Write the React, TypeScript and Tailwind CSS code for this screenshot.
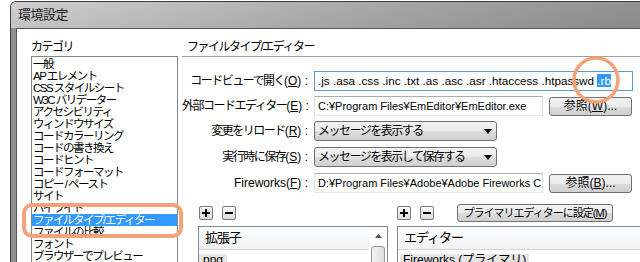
import type { ReactNode } from 'react'

const categories = [
  '一般',
  'AP エレメント',
  'CSS スタイルシート',
  'W3C バリデーター',
  'アクセシビリティ',
  'ウィンドウサイズ',
  'コードカラーリング',
  'コードの書き換え',
  'コードヒント',
  'コードフォーマット',
  'コピー / ペースト',
  'サイト',
  'ハイライト',
  'ファイルタイプ/エディター',
  'ファイルの比較',
  'フォント',
  'ブラウザーでプレビュー',
]

const selectedCategory = 'ファイルタイプ/エディター'

function Label({ text, keyChar, latin }: { text: string; keyChar: string; latin?: boolean }) {
  return (
    <div className="w-[126px] shrink-0 whitespace-nowrap text-right leading-[20px]">
      <span className={latin ? '' : 'tracking-[-1.5px]'}>{text}</span>(<span className="underline">{keyChar}</span>) :
    </div>
  )
}

function Button({ children, className }: { children: ReactNode; className?: string }) {
  return (
    <div
      className={`flex items-center justify-center whitespace-nowrap rounded-[3px] border border-[#707070] bg-[linear-gradient(#f3f3f3,#ebebeb_50%,#dddddd_50%,#cfcfcf)] leading-none ${className ?? ''}`}
    >
      {children}
    </div>
  )
}

function Select({ value }: { value: string }) {
  return (
    <div className="flex h-[20px] w-[183px] items-center justify-between rounded-[3px] border border-[#707070] bg-[linear-gradient(#f3f3f3,#ebebeb_50%,#dddddd_50%,#cfcfcf)] pl-[3px] pr-[4px]">
      <span className="whitespace-nowrap tracking-[-1.5px]">{value}</span>
      <svg width="8" height="5" viewBox="0 0 8 5">
        <path d="M0 0h8L4 5z" fill="#000" />
      </svg>
    </div>
  )
}

function Input({ children, width, focused }: { children: ReactNode; width: string; focused?: boolean }) {
  return (
    <div
      className={`flex h-[20px] items-center overflow-hidden whitespace-nowrap border bg-white pl-[3px] ${width} ${
        focused ? 'border-[#5c9ad6]' : 'border-[#abadb3] border-b-[#e3e9ef] border-l-[#dbdfe6] border-r-[#dbdfe6]'
      }`}
    >
      {children}
    </div>
  )
}

function MiniButton({ kind }: { kind: 'plus' | 'minus' }) {
  return (
    <div className="flex h-[14px] w-[14px] items-center justify-center rounded-[2px] border border-[#7a7a7a] bg-[linear-gradient(#fafafa,#dcdcdc)]">
      <svg width="8" height="8" viewBox="0 0 8 8">
        <path d="M0 4h8" stroke="#000" strokeWidth="2" />
        {kind === 'plus' && <path d="M4 0v8" stroke="#000" strokeWidth="2" />}
      </svg>
    </div>
  )
}

function ListHeader({ children }: { children: ReactNode }) {
  return (
    <div className="h-[23px] border-b border-[#d5d5d5] bg-[linear-gradient(#ffffff,#f1f2f4)] pl-[6px] text-[13px] leading-[22px] tracking-[-1px]">
      {children}
    </div>
  )
}

export default function App() {
  return (
    <div className="relative h-[262px] w-[640px] overflow-hidden bg-white text-[12px] text-black font-['Liberation_Sans','Noto_Sans_CJK_JP',sans-serif]">
      <div className="ml-[10px] mt-[1px] flex h-[261px] flex-col overflow-hidden rounded-tl-[6px] border-l border-t border-[#3c3c3c] bg-[linear-gradient(90deg,#8f8f8f,#b3b3b3_50%,#9a9a9a)]">
        <div className="flex h-[26px] shrink-0 items-center bg-[linear-gradient(165deg,#cfcfcf_0%,#b4b4b4_35%,#a2a2a2_60%,#8a8a8a_100%)] pl-[7px] text-[13px] text-[#1c1c1c]">
          <span className="tracking-[-0.5px]">環境設定</span>
        </div>
        <div className="flex min-h-0 flex-1 pl-[5px]">
          <div className="flex min-h-0 flex-1 border-l border-t border-[#555] bg-white">
            {/* category list */}
            <div className="flex w-[161px] shrink-0 flex-col pl-[14px] pt-[9px]">
              <div className="h-[18px] leading-[18px] tracking-[-1.5px]">カテゴリ</div>
              <div className="flex-1 border border-[#828790] pt-[1px]">
                {categories.map((c) => (
                  <div
                    key={c}
                    className={`h-[12px] whitespace-nowrap pl-[1px] text-[11.5px] leading-[12px] tracking-[-1.5px] ${
                      c === selectedCategory ? 'bg-[#3399ff] text-white' : ''
                    }`}
                  >
                    {c}
                  </div>
                ))}
              </div>
            </div>

            {/* settings panel */}
            <div className="ml-[4px] flex min-w-0 flex-1 flex-col pt-[9px]">
              <div className="h-[20px] border-b border-[#a0a0a0] pl-[5px] leading-[18px] tracking-[-1.5px]">
                ファイルタイプ/エディター
              </div>

              <div className="mt-[14px] flex h-[20px] items-center gap-[6px]">
                <Label text="コードビューで開く" keyChar="O" />
                <Input width="w-[319px]" focused>
                  <span className="text-[11.7px]">
                    .js .asa .css .inc .txt .as .asc .asr .htaccess .htpasswd{' '}
                    <span className="bg-[#3399ff] text-white">.rb</span>
                  </span>
                </Input>
              </div>

              <div className="mt-[5px] flex h-[20px] items-center gap-[6px]">
                <Label text="外部コードエディター" keyChar="E" />
                <Input width="w-[229px]">
                  <span className="text-[11px]">C:¥Program Files¥EmEditor¥EmEditor.exe</span>
                </Input>
                <Button className="h-[19px] w-[83px]">
                  参照(<span className="underline">W</span>)...
                </Button>
              </div>

              <div className="mt-[5px] flex h-[20px] items-center gap-[6px]">
                <Label text="変更をリロード" keyChar="R" />
                <Select value="メッセージを表示する" />
              </div>

              <div className="mt-[6px] flex h-[20px] items-center gap-[6px]">
                <Label text="実行時に保存" keyChar="S" />
                <Select value="メッセージを表示して保存する" />
              </div>

              <div className="mt-[6px] flex h-[20px] items-center gap-[6px]">
                <Label text="Fireworks" keyChar="F" latin />
                <Input width="w-[229px]">
                  <span className="text-[11px]">D:¥Program Files¥Adobe¥Adobe Fireworks C</span>
                </Input>
                <Button className="h-[19px] w-[83px]">
                  参照(<span className="underline">B</span>)...
                </Button>
              </div>

              <div className="mt-[11px] flex gap-[9px] pl-[16px]">
                <div className="flex w-[190px] shrink-0 flex-col">
                  <div className="flex h-[18px] items-center gap-[9px] pl-[1px]">
                    <MiniButton kind="plus" />
                    <MiniButton kind="minus" />
                  </div>
                  <div className="mt-[4px] flex h-[40px] border border-[#828790]">
                    <div className="flex-1">
                      <ListHeader>拡張子</ListHeader>
                      <div className="pt-[1px]">
                        <span className="inline-block bg-[#e6e6e6] px-[4px] leading-[13px]">png</span>
                      </div>
                    </div>
                    <div className="flex w-[18px] flex-col items-center">
                      <div className="flex h-[19px] items-center justify-center">
                        <svg width="7" height="4" viewBox="0 0 7 4">
                          <path d="M3.5 0L7 4H0z" fill="#555" />
                        </svg>
                      </div>
                      <div className="mt-[1px] h-[20px] w-[14px] rounded-t-[3px] border border-[#979797] bg-[linear-gradient(90deg,#f2f2f2,#dedede)]" />
                    </div>
                  </div>
                </div>

                <div className="flex w-[260px] shrink-0 flex-col">
                  <div className="flex h-[18px] items-center">
                    <MiniButton kind="plus" />
                    <div className="ml-[9px]">
                      <MiniButton kind="minus" />
                    </div>
                    <Button className="ml-[23px] h-[18px] w-[156px] text-[11px] tracking-[-1px]">
                      プライマリエディターに設定(<span className="underline">M</span>)
                    </Button>
                  </div>
                  <div className="mt-[4px] h-[40px] border border-[#828790]">
                    <ListHeader>エディター</ListHeader>
                    <div className="pl-[2px] pt-[1px]">
                      <span className="inline-block bg-[#e6e6e6] px-[3px] leading-[13px]">Fireworks (プライマリ)</span>
                    </div>
                  </div>
                </div>
              </div>
            </div>
          </div>
        </div>
      </div>

      {/* annotation marks */}
      <svg className="pointer-events-none absolute left-0 top-0" width="640" height="262" viewBox="0 0 640 262">
        <circle cx="596" cy="80" r="22" fill="none" stroke="#f5a27a" strokeWidth="3.5" />
        <rect x="24" y="205" width="157" height="31" rx="8" fill="none" stroke="#f5a27a" strokeWidth="4" />
      </svg>
    </div>
  )
}
